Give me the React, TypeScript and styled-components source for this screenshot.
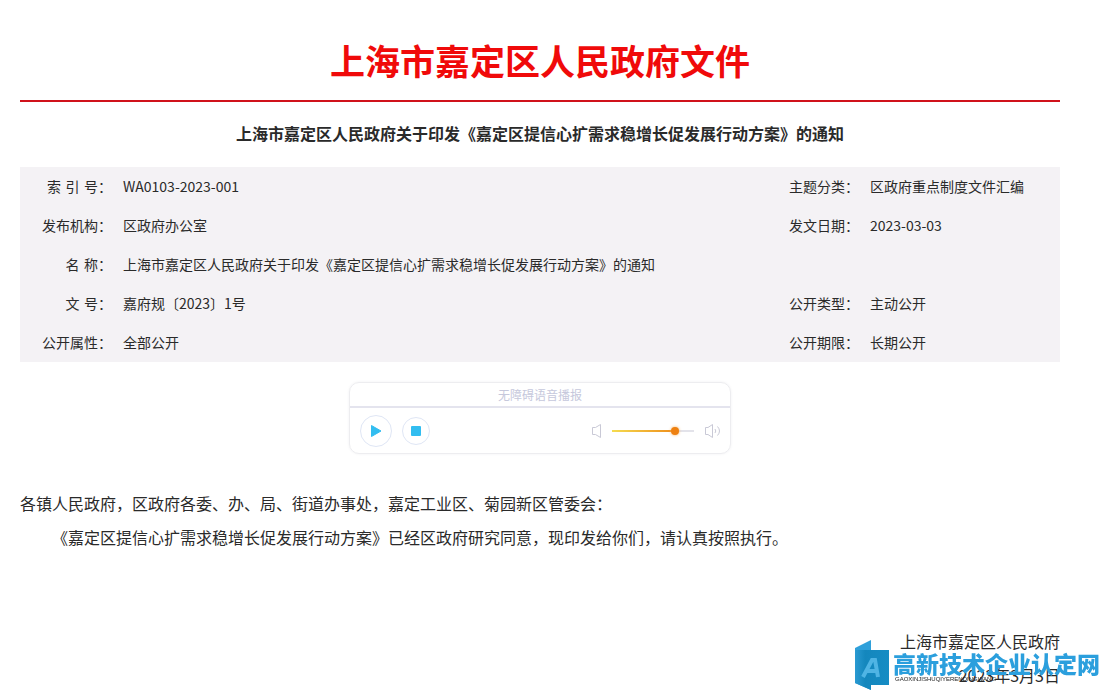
import React, { useState } from "react";
import styled, { createGlobalStyle } from "styled-components";

const GlobalStyle = createGlobalStyle`
  * {
    box-sizing: border-box;
  }
  body {
    margin: 0;
    background: #fff;
    color: #2a2a2a;
    font-family: "Noto Sans CJK SC", "Noto Sans", sans-serif;
    font-size: 14px;
  }
`;

const Page = styled.main`
  padding: 25px 42px 0 20px;
`;

const Masthead = styled.h1`
  margin: 0;
  padding-bottom: 6px;
  border-bottom: 2px solid #d0121b;
  color: #f00a0a;
  font-size: 35px;
  font-weight: 700;
  line-height: 69px;
  text-align: center;
`;

const DocumentTitle = styled.h2`
  margin: 0;
  padding-bottom: 2px;
  font-size: 16px;
  font-weight: 700;
  line-height: 63px;
  text-align: center;
`;

const InfoTable = styled.table`
  width: 100%;
  border-collapse: collapse;
  table-layout: fixed;
  background: #f4f2f5;
`;

const LabelCol = styled.col`
  width: 92px;
`;

const SideValueCol = styled.col`
  width: 201px;
`;

const Label = styled.th`
  height: 39px;
  padding: 0;
  font-family: "DejaVu Sans", "Noto Sans CJK SC", sans-serif;
  font-weight: 400;
  line-height: 20px;
  text-align: right;
  white-space: nowrap;
`;

const Value = styled.td`
  padding: 0 0 2px 11px;
  line-height: 20px;
`;

const Player = styled.section`
  width: 382px;
  margin: 20px auto 32px;
  border: 1px solid #ededf0;
  border-radius: 10px;
  box-shadow: 0 0 3px #f0f0f2;
`;

const PlayerTitle = styled.h3`
  margin: 0;
  border-bottom: 2px solid #e4e4ee;
  color: #c6c8dc;
  font-size: 12px;
  font-weight: 400;
  line-height: 23px;
  text-align: center;
`;

const Controls = styled.div`
  display: flex;
  align-items: center;
  height: 45px;
  padding: 0 9px 0 10px;
`;

const RoundButton = styled.button<{ $size: number }>`
  display: flex;
  align-items: center;
  justify-content: center;
  width: ${(p) => p.$size}px;
  height: ${(p) => p.$size}px;
  margin-right: 10px;
  padding: 0;
  border: 1px solid #dfe6f5;
  border-radius: 50%;
  background: #fff;
  cursor: pointer;
`;

const Volume = styled.label`
  display: flex;
  align-items: center;
  gap: 10px;
  margin-left: auto;
`;

const VolumeRange = styled.input`
  appearance: none;
  width: 82px;
  height: 12px;
  margin: 0;
  background: transparent;

  &::-webkit-slider-runnable-track {
    height: 2px;
    background: linear-gradient(
      to right,
      #f5dc50 0,
      #ee8a18 var(--level),
      #e3e3ea var(--level)
    );
  }

  &::-webkit-slider-thumb {
    appearance: none;
    width: 8px;
    height: 8px;
    margin-top: -3px;
    border-radius: 50%;
    background: #ee8010;
    box-shadow: 0 0 3px #f5b060;
  }
`;

const Body = styled.article`
  font-size: 16px;
  line-height: 34px;
`;

const Salutation = styled.p`
  margin: 0;
`;

const Paragraph = styled.p`
  margin: 0;
  text-indent: 2em;
`;

const Signature = styled.footer`
  padding-top: 70px;
  text-align: right;
`;

const SignatureLine = styled.p`
  margin: 0;
`;

const Watermark = styled.aside`
  position: fixed;
  right: 2px;
  bottom: 0;
  display: flex;
  gap: 4px;
  line-height: 24px;
`;

const WatermarkText = styled.div`
  display: flex;
  flex-direction: column;
  padding-top: 11px;
`;

const WatermarkName = styled.strong`
  color: #2b9fdd;
  font-size: 23px;
  font-weight: 900;
`;

const WatermarkPinyin = styled.small`
  padding-left: 2px;
  color: #222;
  font-family: "Liberation Sans", sans-serif;
  font-size: 6px;
  line-height: 8px;
`;

type Field = { label: string; value: string };

const rows: Field[][] = [
  [
    { label: "索 引 号：", value: "WA0103-2023-001" },
    { label: "主题分类：", value: "区政府重点制度文件汇编" },
  ],
  [
    { label: "发布机构：", value: "区政府办公室" },
    { label: "发文日期：", value: "2023-03-03" },
  ],
  [
    {
      label: "名 称：",
      value: "上海市嘉定区人民政府关于印发《嘉定区提信心扩需求稳增长促发展行动方案》的通知",
    },
  ],
  [
    { label: "文 号：", value: "嘉府规〔2023〕1号" },
    { label: "公开类型：", value: "主动公开" },
  ],
  [
    { label: "公开属性：", value: "全部公开" },
    { label: "公开期限：", value: "长期公开" },
  ],
];

function MutedIcon() {
  return (
    <svg width="11" height="16" viewBox="0 0 11 16" fill="none" stroke="#c9c9d6" aria-hidden="true">
      <path d="M1.5 4.5H4.5L9.5 1.5V14.5L4.5 11.5H1.5Z" />
    </svg>
  );
}

function LoudIcon() {
  return (
    <svg width="17" height="16" viewBox="0 0 17 16" fill="none" stroke="#c9c9d6" aria-hidden="true">
      <path d="M1.5 4.5H4L8.5 1.5V14.5L4 11.5H1.5Z" />
      <path d="M11 6Q12.5 8 11 10M13.5 3.5Q17.5 8 13.5 12.5" />
    </svg>
  );
}

function WatermarkLogo() {
  return (
    <svg width="35" height="50" viewBox="0 0 35 50" aria-hidden="true">
      <defs>
        <linearGradient id="panel" x1="0" x2="1" y1="0" y2="0">
          <stop offset="0" stopColor="#2a9ad2" />
          <stop offset="0.3" stopColor="#1487bd" />
          <stop offset="1" stopColor="#168cc4" />
        </linearGradient>
      </defs>
      <path d="M1 8L17 0V50L1 43Z" fill="#2fa0da" />
      <path d="M1 10H35V45H17V50L1 43Z" fill="url(#panel)" />
      <path
        d="M9 37L18 20H21L24 37M13 31H23"
        fill="none"
        stroke="#4fb4e4"
        strokeWidth="4"
      />
    </svg>
  );
}

function AudioPlayer() {
  const [volume, setVolume] = useState(80);
  return (
    <Player aria-label="无障碍语音播报">
      <PlayerTitle>无障碍语音播报</PlayerTitle>
      <Controls>
        <RoundButton type="button" $size={32} aria-label="播放">
          <svg width="12" height="14" viewBox="0 0 12 14" aria-hidden="true">
            <path d="M1.5 1.5L11 7L1.5 12.5Z" fill="#32bdf0" stroke="#32bdf0" strokeLinejoin="round" />
          </svg>
        </RoundButton>
        <RoundButton type="button" $size={28} aria-label="停止">
          <svg width="10" height="10" viewBox="0 0 10 10" aria-hidden="true">
            <rect width="10" height="10" rx="1" fill="#32bdf0" />
          </svg>
        </RoundButton>
        <Volume>
          <MutedIcon />
          <VolumeRange
            type="range"
            min={0}
            max={100}
            value={volume}
            aria-label="音量"
            onChange={(e) => setVolume(Number(e.target.value))}
            style={{ "--level": `${volume}%` } as React.CSSProperties}
          />
          <LoudIcon />
        </Volume>
      </Controls>
    </Player>
  );
}

export default function App() {
  return (
    <>
      <GlobalStyle />
      <Page>
        <Masthead>上海市嘉定区人民政府文件</Masthead>
        <DocumentTitle>
          上海市嘉定区人民政府关于印发《嘉定区提信心扩需求稳增长促发展行动方案》的通知
        </DocumentTitle>
        <InfoTable>
          <colgroup>
            <LabelCol />
            <col />
            <LabelCol />
            <SideValueCol />
          </colgroup>
          <tbody>
            {rows.map((row) => (
              <tr key={row[0].label}>
                {row.map((field) => (
                  <React.Fragment key={field.label}>
                    <Label scope="row">{field.label}</Label>
                    <Value colSpan={row.length === 1 ? 3 : 1}>{field.value}</Value>
                  </React.Fragment>
                ))}
              </tr>
            ))}
          </tbody>
        </InfoTable>
        <AudioPlayer />
        <Body>
          <Salutation>
            各镇人民政府，区政府各委、办、局、街道办事处，嘉定工业区、菊园新区管委会：
          </Salutation>
          <Paragraph>
            《嘉定区提信心扩需求稳增长促发展行动方案》已经区政府研究同意，现印发给你们，请认真按照执行。
          </Paragraph>
          <Signature>
            <SignatureLine>上海市嘉定区人民政府</SignatureLine>
            <SignatureLine>2023年3月3日</SignatureLine>
          </Signature>
        </Body>
      </Page>
      <Watermark>
        <WatermarkLogo />
        <WatermarkText>
          <WatermarkName>高新技术企业认定网</WatermarkName>
          <WatermarkPinyin>GAOXINJISHUQIYERENDINGWANG</WatermarkPinyin>
        </WatermarkText>
      </Watermark>
    </>
  );
}
